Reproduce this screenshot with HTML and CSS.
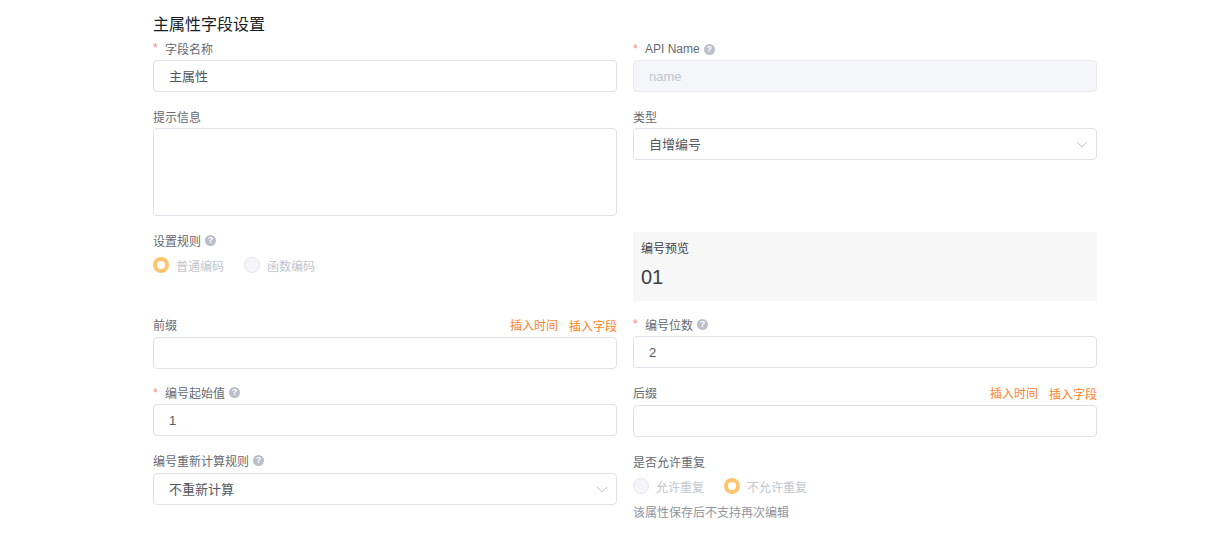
FILE: index.html
```html
<!DOCTYPE html>
<html lang="zh-CN">
<head>
    <meta charset="UTF-8">
    <title>主属性字段设置</title>
    <link rel="stylesheet" href="styles.css">
</head>
<body>
    <div class="container">
        <h1 class="title">主属性字段设置</h1>
        <div class="columns">
            <div class="column">
                <div class="field">
                    <div class="label"><span class="required">*</span>字段名称</div>
                    <input class="input input-cjk" type="text" value="主属性">
                </div>
                <div class="field">
                    <div class="label">提示信息</div>
                    <textarea class="input textarea"></textarea>
                </div>
                <div class="field field-rule">
                    <div class="label">设置规则<span class="help">?</span></div>
                    <div class="radio-group">
                        <div class="radio-item"><span class="radio checked"></span>普通编码</div>
                        <div class="radio-item"><span class="radio"></span>函数编码</div>
                    </div>
                </div>
                <div class="field">
                    <div class="label label-tall">
                        前缀
                        <div class="links"><span class="link">插入时间</span><span class="link link-low">插入字段</span></div>
                    </div>
                    <input class="input" type="text">
                </div>
                <div class="field">
                    <div class="label label-short"><span class="required">*</span>编号起始值<span class="help">?</span></div>
                    <input class="input" type="text" value="1">
                </div>
                <div class="field">
                    <div class="label label-tall">编号重新计算规则<span class="help">?</span></div>
                    <div class="input input-cjk select">
                        不重新计算
                        <svg class="chevron" viewBox="0 0 12 7"><path d="M1 1l5 5 5-5"/></svg>
                    </div>
                </div>
            </div>
            <div class="column">
                <div class="field">
                    <div class="label label-latin"><span class="required">*</span>API Name<span class="help">?</span></div>
                    <input class="input input-disabled" type="text" value="name" disabled>
                </div>
                <div class="field field-type">
                    <div class="label">类型</div>
                    <div class="input input-cjk select">
                        自增编号
                        <svg class="chevron" viewBox="0 0 12 7"><path d="M1 1l5 5 5-5"/></svg>
                    </div>
                </div>
                <div class="preview">
                    <div class="preview-label">编号预览</div>
                    <div class="preview-value">01</div>
                </div>
                <div class="field">
                    <div class="label"><span class="required">*</span>编号位数<span class="help">?</span></div>
                    <input class="input" type="text" value="2">
                </div>
                <div class="field">
                    <div class="label label-tall">
                        后缀
                        <div class="links"><span class="link">插入时间</span><span class="link link-low">插入字段</span></div>
                    </div>
                    <input class="input" type="text">
                </div>
                <div class="field">
                    <div class="label">是否允许重复</div>
                    <div class="radio-group">
                        <div class="radio-item"><span class="radio"></span>允许重复</div>
                        <div class="radio-item"><span class="radio checked"></span>不允许重复</div>
                    </div>
                    <div class="hint">该属性保存后不支持再次编辑</div>
                </div>
            </div>
        </div>
    </div>
</body>
</html>
```

FILE: styles.css
```css
body {
    margin: 0;
    background-color: #fff;
    font-family: "Liberation Sans", "Noto Sans CJK SC", sans-serif;
    font-size: 12px;
    color: #545861;
}
.container {
    width: 944px;
    margin-left: 153px;
    padding-top: 14px;
}
.title {
    margin: 0;
    height: 22px;
    font-size: 16px;
    font-weight: 400;
    line-height: 22px;
    color: #181c25;
}
.columns {
    display: grid;
    grid-template-columns: 464px 464px;
    gap: 16px;
}
.field {
    margin-bottom: 12px;
}
.field-rule {
    height: 72px;
}
.field-type {
    height: 56px;
    margin-bottom: 72px;
}
.label {
    display: flex;
    align-items: center;
    box-sizing: border-box;
    height: 24px;
    color: #666a73;
}
.label-tall {
    height: 25px;
    padding-bottom: 1px;
}
.label-short {
    height: 23px;
}
.label-latin {
    padding-top: 2px;
}
.required {
    width: 12px;
    color: #ff8a75;
}
.help {
    width: 11px;
    height: 11px;
    margin-left: 4px;
    border-radius: 50%;
    background-color: #bbbfca;
    color: #fff;
    font-size: 9px;
    font-weight: 700;
    line-height: 11px;
    text-align: center;
}
.links {
    display: flex;
    gap: 11px;
    margin-left: auto;
    color: #ff7f1e;
}
.link-low {
    position: relative;
    top: 1px;
}
.input {
    display: block;
    box-sizing: border-box;
    width: 100%;
    height: 32px;
    margin: 0;
    padding: 0 15px;
    border: 1px solid #dee1e8;
    border-radius: 4px;
    outline: none;
    background-color: #fff;
    font-family: inherit;
    font-size: 13px;
    color: #545861;
}
.input-cjk {
    padding-bottom: 2px;
}
.input-disabled {
    background-color: #f4f6fa;
    border-color: #e9ebf0;
    color: #c1c5ce;
}
.textarea {
    height: 88px;
    resize: none;
}
.select {
    display: flex;
    align-items: center;
    justify-content: space-between;
}
.chevron {
    width: 12px;
    height: 7px;
    margin-top: 2px;
    margin-right: -7px;
    fill: none;
    stroke: #c1c5ce;
    stroke-width: 1;
}
.radio-group {
    display: flex;
    gap: 20px;
    height: 26px;
    align-items: center;
    color: #c1c5ce;
}
.radio-item {
    display: flex;
    align-items: center;
    gap: 7px;
}
.radio {
    box-sizing: border-box;
    width: 16px;
    height: 16px;
    border: 1px solid #e4e7ed;
    border-radius: 50%;
    background-color: #f4f6fa;
}
.radio.checked {
    border: 4px solid #ffc46e;
    background-color: #fff;
}
.hint {
    margin-top: 4px;
    line-height: 20px;
    color: #91959e;
}
.preview {
    box-sizing: border-box;
    height: 69px;
    margin-bottom: 11px;
    padding: 8px;
    background-color: #f7f7f7;
}
.preview-label {
    line-height: 18px;
    color: #3d3f45;
}
.preview-value {
    margin-top: 6px;
    font-size: 20px;
    line-height: 26px;
    color: #3d3f45;
}
```
